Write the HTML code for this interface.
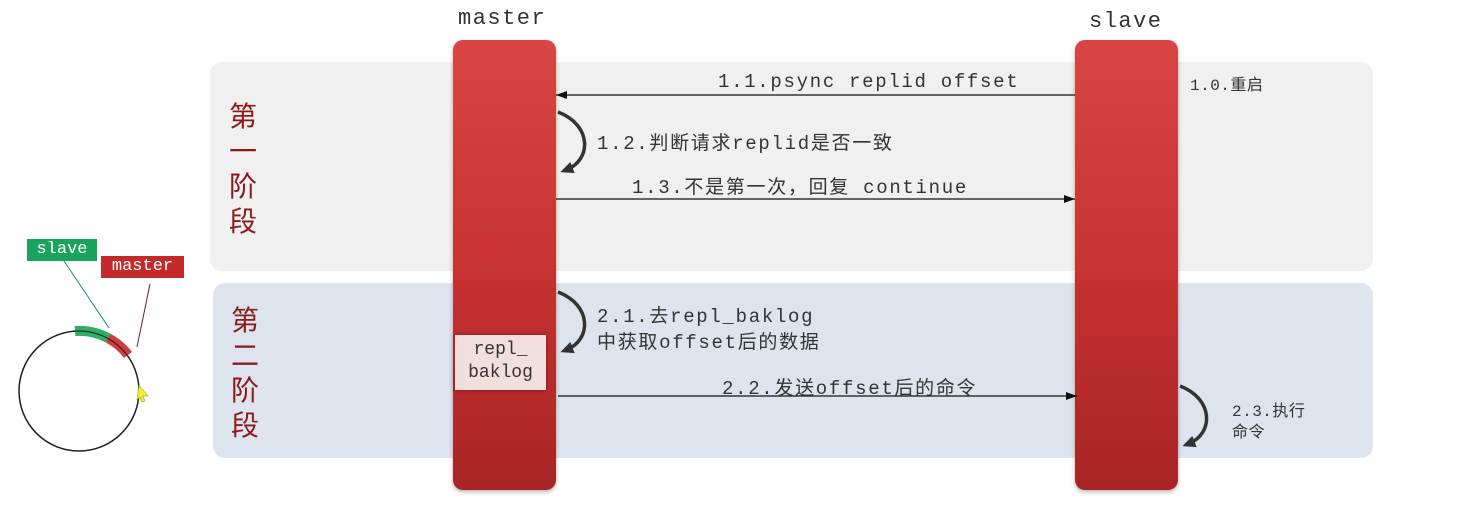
<!DOCTYPE html>
<html><head><meta charset="utf-8"><style>
*{margin:0;padding:0}
body{width:1463px;height:515px;background:#fff;position:relative;overflow:hidden;font-family:"Liberation Mono","Noto Sans CJK SC",monospace;color:#333}
.a{position:absolute;white-space:nowrap}
.panel{position:absolute;border-radius:12px}
.bar{position:absolute;width:103px;top:40px;height:450px;border-radius:10px;background:linear-gradient(#d94444,#c83232 50%,#a82424);box-shadow:0 2px 4px rgba(0,0,0,.3)}
.st{position:absolute;font-family:"Noto Sans CJK SC",sans-serif;font-size:28px;color:#8b1a1a;line-height:35px;width:30px}
.t{font-size:19px;color:#333;letter-spacing:1.7px}
.s{font-size:16px;color:#333;letter-spacing:.5px}
</style></head><body>
<div class="panel" style="left:210px;top:62px;width:1163px;height:209px;background:#f0f0f0"></div>
<div class="panel" style="left:213px;top:283px;width:1160px;height:175px;background:#dde4ee"></div>
<div class="st" style="left:229px;top:98px">第<br>一<br>阶<br>段</div>
<div class="st" style="left:231px;top:302px">第<br>二<br>阶<br>段</div>
<div class="a" style="left:458px;top:6px;font-size:22px;letter-spacing:1.5px;color:#333">master</div>
<div class="a" style="left:1089px;top:9px;font-size:22px;letter-spacing:1.5px;color:#333">slave</div>
<div class="bar" style="left:453px"></div>
<div class="bar" style="left:1075px"></div>
<div class="a" style="left:455px;top:335px;width:91px;height:55px;background:#f3dede;box-shadow:0 0 4px rgba(0,0,0,.4);text-align:center;font-size:18px;line-height:23px;padding-top:4px;box-sizing:border-box;color:#333">repl_<br>baklog</div>
<svg class="a" style="left:0;top:0" width="1463" height="515">
<defs><marker id="m" markerUnits="userSpaceOnUse" markerWidth="12" markerHeight="10" refX="11" refY="5" orient="auto"><path d="M0,1 L11,5 L0,9 z" fill="#111"/></marker>
<marker id="c" markerUnits="userSpaceOnUse" markerWidth="14" markerHeight="14" refX="7" refY="7" orient="auto"><path d="M0,1 L13,7 L0,13 z" fill="#333"/></marker></defs>
<line x1="1075" y1="95" x2="556" y2="95" stroke="#111" stroke-width="1.3" marker-end="url(#m)"/>
<line x1="556" y1="199" x2="1075" y2="199" stroke="#111" stroke-width="1.3" marker-end="url(#m)"/>
<line x1="558" y1="396" x2="1077" y2="396" stroke="#111" stroke-width="1.3" marker-end="url(#m)"/>
<path d="M558,112 C592,125 592,160 566,170" fill="none" stroke="#333" stroke-width="3.5" marker-end="url(#c)"/>
<path d="M558,292 C592,305 592,340 566,350" fill="none" stroke="#333" stroke-width="3.5" marker-end="url(#c)"/>
<path d="M1180,386 C1214,399 1214,434 1188,444" fill="none" stroke="#333" stroke-width="3.5" marker-end="url(#c)"/>
<circle cx="79" cy="391" r="60" fill="none" stroke="#222" stroke-width="1.5"/>
<path d="M75,331 A60,60 0 0 1 108,338" fill="none" stroke="#1aa35a" stroke-width="10" stroke-opacity=".9"/>
<path d="M108,338 A60,60 0 0 1 128,355" fill="none" stroke="#c42a2a" stroke-width="10" stroke-opacity=".9"/>
<circle cx="79" cy="391" r="60" fill="none" stroke="#222" stroke-width="1" stroke-dasharray="0"/>
<line x1="64" y1="261" x2="109" y2="328" stroke="#1a8a6a" stroke-width="1"/>
<line x1="150" y1="284" x2="137" y2="347" stroke="#7a1a2a" stroke-width="1"/>
<path d="M139,385 L148,396 L143,396 L145,401 L142,402 L140,397 L137,400 z" fill="#ee3" stroke="#880" stroke-width=".5"/>
</svg>
<div class="a" style="left:27px;top:239px;width:70px;height:22px;background:#1aa35a;color:#fff;font-size:17px;line-height:22px;text-align:center">slave</div>
<div class="a" style="left:101px;top:256px;width:83px;height:22px;background:#c42a2a;color:#fff;font-size:17px;line-height:22px;text-align:center">master</div>
<div class="a t" style="left:718px;top:71px">1.1.psync replid offset</div>
<div class="a s" style="left:1190px;top:71px">1.0.重启</div>
<div class="a t" style="left:597px;top:128px">1.2.判断请求replid是否一致</div>
<div class="a t" style="left:632px;top:172px">1.3.不是第一次，回复 continue</div>
<div class="a t" style="left:597px;top:301px">2.1.去repl_baklog</div>
<div class="a t" style="left:597px;top:327px">中获取offset后的数据</div>
<div class="a t" style="left:722px;top:373px">2.2.发送offset后的命令</div>
<div class="a s" style="left:1232px;top:397px">2.3.执行</div>
<div class="a s" style="left:1232px;top:418px">命令</div>
</body></html>
